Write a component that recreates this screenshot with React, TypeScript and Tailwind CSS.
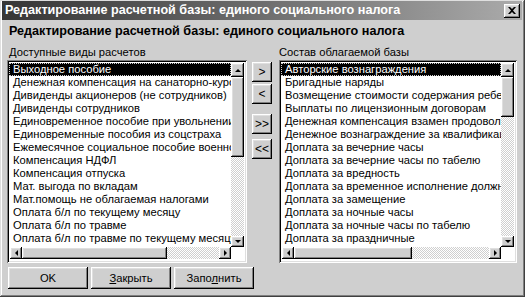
const leftItems = [
  'Выходное пособие',
  'Денежная компенсация на санаторно-курортное лечение',
  'Дивиденды акционеров (не сотрудников)',
  'Дивиденды сотрудников',
  'Единовременное пособие при увольнении',
  'Единовременные пособия из соцстраха',
  'Ежемесячное социальное пособие военнослужащим',
  'Компенсация НДФЛ',
  'Компенсация отпуска',
  'Мат. выгода по вкладам',
  'Мат.помощь не облагаемая налогами',
  'Оплата б/л по текущему месяцу',
  'Оплата б/л по травме',
  'Оплата б/л по травме по текущему месяцу',
]

const rightItems = [
  'Авторские вознаграждения',
  'Бригадные наряды',
  'Возмещение стоимости содержания ребенка',
  'Выплаты по лицензионным договорам',
  'Денежная компенсация взамен продовольственного пайка',
  'Денежное вознаграждение за квалификационный разряд',
  'Доплата за вечерние часы',
  'Доплата за вечерние часы по табелю',
  'Доплата за вредность',
  'Доплата за временное исполнение должности',
  'Доплата за замещение',
  'Доплата за ночные часы',
  'Доплата за ночные часы по табелю',
  'Доплата за праздничные',
]

const raised =
  'bg-[#cfcfcf] shadow-[inset_-1px_-1px_#000,inset_1px_1px_#fff,inset_-2px_-2px_#808080,inset_2px_2px_#dfdfdf]'
const sunken =
  'bg-white shadow-[inset_1px_1px_#808080,inset_-1px_-1px_#fff,inset_2px_2px_#000,inset_-2px_-2px_#dfdfdf]'
const dither =
  'bg-[repeating-conic-gradient(#cfcfcf_0_25%,#ffffff_0_50%)] bg-[length:2px_2px]'

function Arrow({ dir }: { dir: 'up' | 'down' | 'left' | 'right' }) {
  const pts = {
    up: '1,4 7,4 4,1',
    down: '1,1 7,1 4,4',
    left: '4,1 4,7 1,4',
    right: '1,1 1,7 4,4',
  }[dir]
  const vertical = dir === 'up' || dir === 'down'
  return (
    <svg width={vertical ? 8 : 5} height={vertical ? 5 : 8} viewBox={vertical ? '0 0 8 5' : '0 0 5 8'}>
      <polygon points={pts} fill="#000" />
    </svg>
  )
}

function ListBox({ items, thumb, hthumb }: { items: string[]; thumb: number; hthumb: number }) {
  return (
    <div className={`${sunken} h-[203px] p-[2px]`}>
      <div className="grid h-full grid-cols-[1fr_13px] grid-rows-[185px_12px_1fr] pr-[1px]">
        <div className="overflow-hidden pt-[1px]">
          {items.map((t, i) => (
            <div
              key={t}
              className={
                i === 0
                  ? 'h-[13px] whitespace-nowrap border border-dotted border-[#cfcfcf] bg-black pl-[3px] leading-[11px] text-white'
                  : 'h-[13px] whitespace-nowrap pl-[4px] leading-[13px] text-black'
              }
            >
              {t}
            </div>
          ))}
        </div>
        <div className="row-span-2 flex flex-col">
          <div className="h-[185px] flex flex-col pt-[1px]">
            <div className={`${raised} flex h-[14px] items-center justify-center`}>
              <Arrow dir="up" />
            </div>
            <div className={raised} style={{ height: thumb }} />
            <div className={`${dither} flex-1`} />
            <div className={`${raised} flex h-[11px] items-center justify-center`}>
              <Arrow dir="down" />
            </div>
          </div>
        </div>
        <div className="flex h-[12px] pl-[1px]">
          <div className={`${raised} flex w-[12px] items-center justify-center`}>
            <Arrow dir="left" />
          </div>
          <div className={raised} style={{ width: hthumb }} />
          <div className={`${dither} flex-1`} />
          <div className={`${raised} flex w-[12px] items-center justify-center`}>
            <Arrow dir="right" />
          </div>
        </div>
      </div>
    </div>
  )
}

function MoveButton({ label }: { label: string }) {
  return (
    <div className={`${raised} flex h-[20px] w-[20px] items-center justify-center text-[12px] leading-none`}>
      {label}
    </div>
  )
}

export default function App() {
  return (
    <div className="h-[297px] w-[525px] overflow-hidden bg-[#cfcfcf] font-['Liberation_Sans',Arial,sans-serif] text-[11.2px] text-black shadow-[inset_-1px_-1px_#404040,inset_1px_1px_#dfdfdf,inset_-2px_-2px_#808080,inset_2px_2px_#fff] pl-[2px] pr-[3px] pt-[1px]">
      <div className="flex h-[19px] items-center justify-between bg-linear-to-r from-[#363636] to-[#ababab] pl-[3px] pr-[2px]">
        <span className="text-[12.6px] font-bold text-white">
          Редактирование расчетной базы: единого социального налога
        </span>
        <div className={`${raised} flex h-[14px] w-[16px] items-center justify-center`}>
          <svg width="8" height="7" viewBox="0 0 8 7">
            <path d="M0 0h2l2 2 2-2h2L5 3.5 8 7H6L4 5 2 7H0l3-3.5z" fill="#000" />
          </svg>
        </div>
      </div>

      <div className="px-[5px]">
        <div className="mt-[4px] h-[15px] pl-[2px] text-[12.6px] font-bold leading-[15px]">
          Редактирование расчетной базы: единого социального налога
        </div>
        <div className="mt-[5px] flex h-[16px] leading-[16px]">
          <div className="w-[272px] pl-[2px]">Доступные виды расчетов</div>
          <div>Состав облагаемой базы</div>
        </div>

        <div className="flex">
          <div className="w-[240px]">
            <ListBox items={leftItems} thumb={80} hthumb={145} />
          </div>
          <div className="ml-[5px] mr-[7px] flex flex-col pt-[2px]">
            <MoveButton label=">" />
            <div className="mt-[2px]">
              <MoveButton label="<" />
            </div>
            <div className="mt-[10px]">
              <MoveButton label=">>" />
            </div>
            <div className="mt-[5px]">
              <MoveButton label="<<" />
            </div>
          </div>
          <div className="flex-1">
            <ListBox items={rightItems} thumb={40} hthumb={118} />
          </div>
        </div>

        <div className="ml-[1px] mt-[4px] flex gap-[3px]">
          <div className={`${raised} flex h-[22px] w-[80px] items-center justify-center`}>OK</div>
          <div className={`${raised} flex h-[22px] w-[80px] items-center justify-center`}>
            <span>
              <u>З</u>акрыть
            </span>
          </div>
          <div className={`${raised} flex h-[22px] w-[80px] items-center justify-center`}>
            <span>
              Запо<u>л</u>нить
            </span>
          </div>
        </div>
      </div>
    </div>
  )
}
